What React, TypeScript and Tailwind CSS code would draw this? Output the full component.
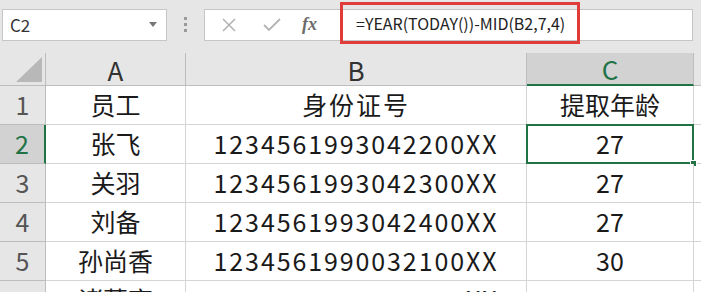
import React from 'react';

const rows = [
  { n: '1', a: '员工', b: '身份证号', c: '提取年龄' },
  { n: '2', a: '张飞', b: '1234561993042200XX', c: '27' },
  { n: '3', a: '关羽', b: '1234561993042300XX', c: '27' },
  { n: '4', a: '刘备', b: '1234561993042400XX', c: '27' },
  { n: '5', a: '孙尚香', b: '1234561990032100XX', c: '30' },
  { n: '6', a: '诸葛亮', b: '1234561994111200XX', c: '26' },
];

const font = { fontFamily: '"Noto Sans CJK SC", "Noto Sans", sans-serif' };

const App = () => {
  return (
    <div className="w-[701px] h-[292px] overflow-hidden bg-[#e6e6e6] text-[#1a1a1a]" style={font}>
      {/* formula bar */}
      <div className="flex items-center h-[53px] pb-[4px]">
        <div className="ml-[2px] w-[165px] h-[32px] bg-white border border-[#c6c6c6] flex items-center justify-between pl-[7px] pr-[9px]">
          <span className="text-[17px] text-[#333]">C2</span>
          <svg width="8" height="5" viewBox="0 0 8 5"><path d="M0 0h8L4 5z" fill="#777" /></svg>
        </div>
        <div className="w-[37px] flex flex-col items-center gap-[3px]">
          <span className="w-[3px] h-[3px] bg-[#9a9a9a]" />
          <span className="w-[3px] h-[3px] bg-[#9a9a9a]" />
          <span className="w-[3px] h-[3px] bg-[#9a9a9a]" />
        </div>
        <div className="flex-1 mr-[8px] h-[32px] bg-white border border-[#c6c6c6] flex items-center">
          <div className="w-[135px] flex items-center pl-[16px]">
            <svg width="16" height="16" viewBox="0 0 16 16" className="mr-[26px]">
              <path d="M2 2l12 12M14 2L2 14" stroke="#b3b3b3" strokeWidth="1.6" />
            </svg>
            <svg width="18" height="14" viewBox="0 0 18 14" className="mr-[21px]">
              <path d="M1 7l5 5L17 1" stroke="#b3b3b3" strokeWidth="1.8" fill="none" />
            </svg>
            <span className="italic font-bold text-[18px] text-[#6b6b6b]" style={{ fontFamily: '"Liberation Serif", serif' }}>fx</span>
          </div>
          <div className="h-[42px] w-[240px] -mt-[8px] -mb-[4px] border-[3px] border-[#e03c3c] flex items-center pl-[13px]">
            <span className="text-[16px] text-[#222] whitespace-nowrap">=YEAR(TODAY())-MID(B2,7,4)</span>
          </div>
        </div>
      </div>

      {/* grid */}
      <div className="grid grid-cols-[46px_140px_341px_167px_1fr] grid-rows-[33px_39px_39px_39px_39px_39px_39px]">
        <div className="border-r border-b border-[#bdbdbd] bg-[#e6e6e6] flex items-end justify-end pr-[3px] pb-[3px]">
          <svg width="26" height="25" viewBox="0 0 26 25"><path d="M26 0v25H0z" fill="#b8b8b8" /></svg>
        </div>
        <div className="border-r border-b border-[#bdbdbd] flex items-center justify-center text-[26px] text-[#333]">A</div>
        <div className="border-r border-b border-[#bdbdbd] flex items-center justify-center text-[26px] text-[#333]">B</div>
        <div className="border-r border-b-2 border-r-[#bdbdbd] border-b-[#217346] bg-[#d2d2d2] flex items-center justify-center text-[26px] text-[#217346]">C</div>
        <div className="border-b border-[#bdbdbd]" />

        {rows.map((r) => {
          const sel = r.n === '2';
          return (
            <React.Fragment key={r.n}>
              <div
                className={
                  sel
                    ? 'border-r-2 border-b border-r-[#217346] border-b-[#bdbdbd] bg-[#d2d2d2] flex items-center justify-center text-[25px] text-[#217346]'
                    : 'border-r border-b border-[#bdbdbd] bg-[#e6e6e6] flex items-center justify-center text-[25px] text-[#555]'
                }
              >
                {r.n}
              </div>
              <div className="bg-white border-r border-b border-[#d4d4d4] flex items-center justify-center text-[25px] whitespace-nowrap">{r.a}</div>
              <div className="bg-white border-r border-b border-[#d4d4d4] flex items-center justify-center text-[25px] whitespace-nowrap tracking-[1.9px]">{r.b}</div>
              <div className="relative bg-white border-r border-b border-[#d4d4d4] flex items-center justify-center text-[25px]">
                {r.c}
                {sel && (
                  <>
                    <div className="absolute -left-[1px] -top-[1px] -right-[1px] -bottom-[1px] border-2 border-[#217346]" />
                    <div className="absolute -right-[4px] -bottom-[4px] w-[7px] h-[7px] bg-[#217346] border border-white" />
                  </>
                )}
              </div>
              <div className="bg-white border-b border-[#d4d4d4]" />
            </React.Fragment>
          );
        })}
      </div>
    </div>
  );
};

export default App;
